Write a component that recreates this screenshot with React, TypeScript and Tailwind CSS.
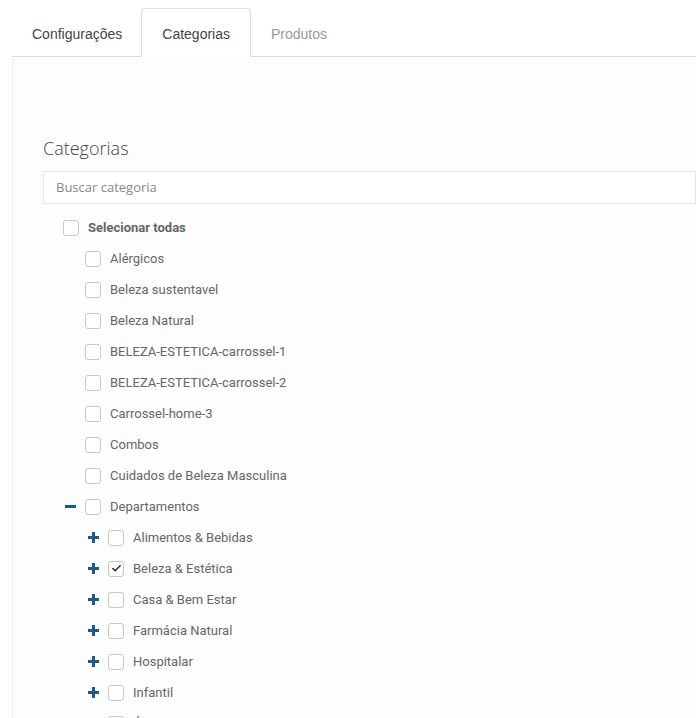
import { Check } from 'lucide-react';

type Item = { label: string; checked?: boolean; expand?: 'plus' | 'minus'; level: number };

const items: Item[] = [
  { label: 'Alérgicos', level: 1 },
  { label: 'Beleza sustentavel', level: 1 },
  { label: 'Beleza Natural', level: 1 },
  { label: 'BELEZA-ESTETICA-carrossel-1', level: 1 },
  { label: 'BELEZA-ESTETICA-carrossel-2', level: 1 },
  { label: 'Carrossel-home-3', level: 1 },
  { label: 'Combos', level: 1 },
  { label: 'Cuidados de Beleza Masculina', level: 1 },
  { label: 'Departamentos', level: 1, expand: 'minus' },
  { label: 'Alimentos & Bebidas', level: 2, expand: 'plus' },
  { label: 'Beleza & Estética', level: 2, expand: 'plus', checked: true },
  { label: 'Casa & Bem Estar', level: 2, expand: 'plus' },
  { label: 'Farmácia Natural', level: 2, expand: 'plus' },
  { label: 'Hospitalar', level: 2, expand: 'plus' },
  { label: 'Infantil', level: 2, expand: 'plus' },
  { label: 'Óleos Essenciais', level: 2, expand: 'plus' },
];

function Box({ checked }: { checked?: boolean }) {
  return (
    <span className="w-4 h-4 shrink-0 rounded-[3px] border border-[#c8c8c8] bg-white flex items-center justify-center">
      {checked && <Check size={11} strokeWidth={3.5} className="text-[#333]" />}
    </span>
  );
}

function Toggle({ kind }: { kind?: 'plus' | 'minus' }) {
  return (
    <span className="w-[11px] h-[11px] shrink-0 relative">
      <span className="absolute left-0 right-0 top-[4px] h-[3px] bg-[#1b5a8c]" />
      {kind === 'plus' && <span className="absolute top-0 bottom-0 left-[4px] w-[3px] bg-[#1b5a8c]" />}
    </span>
  );
}

export default function App() {
  return (
    <div className="min-h-[718px] bg-white overflow-hidden" style={{ fontFamily: '"Liberation Sans", Arial, sans-serif' }}>
      {/* Abas */}
      <div className="pt-2 pl-3">
        <ul className="flex border-b border-[#dddddd] text-[14px] leading-5">
          <li className="pl-5 pr-[19px] pt-[16px] pb-[12px] text-[#444]">Configurações</li>
          <li className="px-5 pt-[15px] pb-[11px] -mb-px text-[#444] bg-white border border-[#dddddd] border-b-white rounded-t-[4px]">
            Categorias
          </li>
          <li className="px-5 pt-[16px] pb-[12px] text-[#999]">Produtos</li>
        </ul>
      </div>

      {/* Painel */}
      <div className="ml-3 border-l border-[#eeeeee] bg-[#fdfdfd] pl-[30px] pt-[79px] min-h-[661px]">
        <h2 className="text-[18px] leading-6 font-light text-[#444]" style={{ fontFamily: '"Open Sans", sans-serif' }}>
          Categorias
        </h2>
        <div
          className="mt-[11px] h-[33px] border border-[#e6e6e6] bg-white flex items-center pl-3 text-[13px] text-[#888]"
          style={{ fontFamily: '"Open Sans", sans-serif' }}
        >
          Buscar categoria
        </div>

        <div className="pt-[16px] text-[13px] text-[#666]" style={{ fontFamily: 'Roboto, sans-serif' }}>
          <div className="h-[31px] -mt-[8px] flex items-center gap-[9px] pl-[20px]">
            <Box />
            <span className="font-bold">Selecionar todas</span>
          </div>
          {items.map((it) => (
            <div
              key={it.label}
              className={
                'h-[31px] flex items-center ' + (it.level === 1 ? 'pl-[22px]' : 'pl-[45px]')
              }
            >
              <span className="w-[20px] flex items-center">
                {it.expand ? <Toggle kind={it.expand} /> : null}
              </span>
              <Box checked={it.checked} />
              <span className="ml-[9px]">{it.label}</span>
            </div>
          ))}
        </div>
      </div>
    </div>
  );
}
